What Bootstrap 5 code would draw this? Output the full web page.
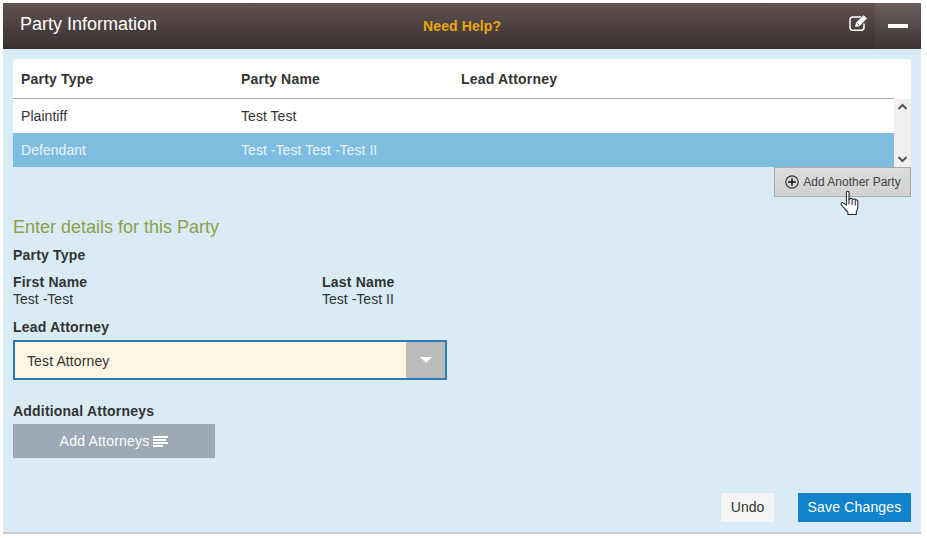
<!DOCTYPE html>
<html lang="en">
<head>
<meta charset="utf-8">
<title>Party Information</title>
<link href="https://cdn.jsdelivr.net/npm/bootstrap@5.3.0/dist/css/bootstrap.min.css" rel="stylesheet">
<style>
html,body{background:#fff;height:100%;overflow:hidden}
body{font-family:"Liberation Sans",Arial,sans-serif;font-size:14px;color:#333;line-height:17px;letter-spacing:.12px}
.pi-panel{margin:3px 0 0 3px;width:918px;height:531px;background:#d9ebf5;border-bottom:2px solid #ccc;display:flex;flex-direction:column}
.pi-head{height:46px;flex:none;background:linear-gradient(#5f5351,#3a3030);color:#fff;position:relative}
.pi-title{font-size:18px;line-height:22px;padding:10px 0 0 17px;width:400px;letter-spacing:0}
.pi-help{color:#e8a80c;font-weight:700;font-size:14px;position:absolute;left:420px;top:15px}
.pi-edit{position:absolute;left:846px;top:11px}
.pi-min{width:46px;height:46px;background:linear-gradient(#6b605e,#3c3332);display:flex;align-items:center;justify-content:center;margin-left:auto}
.pi-min i{display:block;width:20px;height:4px;background:#fff}
.pi-body{flex:1;padding:10px 10px 10px;display:flex;flex-direction:column;position:relative}
.pi-table{background:#fff;border-radius:3px 3px 0 0}
.pi-thead{height:40px;border-bottom:1px solid #aaa;margin-right:17px;display:flex;align-items:center;font-weight:700;padding-top:2px;letter-spacing:.2px}
.pi-scrollwrap{display:flex;height:68px;background:#fff}
.pi-rows{flex:1}
.pi-row{height:34px;display:flex;align-items:center;padding-top:1px;letter-spacing:.05px}
.pi-row.pi-sel{background:#7fbde0;color:#e8f3fa}
.pi-c1{width:228px;padding-left:8px}
.pi-c2{width:220px}
.pi-bar{width:17px;background:#f0f0f0;display:flex;flex-direction:column;justify-content:space-between;align-items:center;padding:4px 0}
.pi-add{align-self:flex-end;width:137px;height:30px;background:linear-gradient(#dcdcdc,#d2d2d2);border:1px solid #aaa;border-radius:0;font-size:12px;color:#444;padding:0 0 0 1px;display:flex;align-items:center;justify-content:center;gap:4px;letter-spacing:0}
.pi-hand{position:absolute;left:837px;top:141px}
.pi-sub{color:#8f9f4a;font-size:18px;line-height:22px;margin:19px 0 0;letter-spacing:0}
.pi-lbl{font-weight:700;margin:0;letter-spacing:.2px}
.pi-first{margin-top:9px}
.pi-two{display:flex;margin-top:10px}
.pi-two>div{width:309px}
.pi-val{letter-spacing:.02px}
.pi-lead{margin-top:11px}
.pi-sel-box{width:434px;height:40px;margin-top:4px;border:2px solid #2a7ab5;background:#fef6e2;display:flex;align-items:stretch}
.pi-sel-box span{flex:1;padding:2px 0 0 12px;display:flex;align-items:center}
.pi-sel-box b{width:39px;background:#bbb;display:flex;align-items:center;justify-content:center}
.pi-sel-box b i{display:block;border-left:6px solid transparent;border-right:6px solid transparent;border-top:6px solid #fff}
.pi-more{margin-top:23px}
.pi-attbtn{width:202px;height:34px;margin-top:4px;background:#9ea9b6;color:#fff;border:0;border-radius:0;font-size:14px;padding:0;display:flex;align-items:center;justify-content:center;gap:4px;letter-spacing:.2px}
.pi-foot{margin-top:auto;display:flex;justify-content:flex-end}
.pi-undo{width:53px;height:29px;background:#f5f5f5;color:#333;border:0;border-radius:0;font-size:14px;padding:0;margin-right:24px}
.pi-save{width:113px;height:29px;background:#1282cc;color:#fff;border:0;border-radius:0;font-size:14px;padding:0;letter-spacing:.18px}
</style>
</head>
<body>
<div class="pi-panel">
  <div class="pi-head d-flex">
    <div class="pi-title">Party Information</div>
    <div class="pi-help">Need Help?</div>
    <svg class="pi-edit" width="20" height="18" viewBox="0 0 20 18" fill="none"><path d="M15 9.500V13.500a2.700 2.700 0 0 1-2.700 2.700H3.700A2.700 2.700 0 0 1 1 13.500V5.700A2.700 2.700 0 0 1 3.700 3H12" stroke="#fff" stroke-width="1.500"/><path d="M6 13l1-4.200 7.600-7.600 3.400 3.400-7.600 7.600z" fill="#fff"/><path d="M8.200 9.200l2.200 2.200" stroke="#4a3f3e" stroke-width=".8"/></svg>
    <div class="pi-min"><i></i></div>
  </div>
  <div class="pi-body">
    <div class="pi-table">
      <div class="pi-thead"><div class="pi-c1">Party Type</div><div class="pi-c2">Party Name</div><div>Lead Attorney</div></div>
      <div class="pi-scrollwrap">
        <div class="pi-rows">
          <div class="pi-row"><div class="pi-c1">Plaintiff</div><div class="pi-c2">Test Test</div></div>
          <div class="pi-row pi-sel"><div class="pi-c1">Defendant</div><div class="pi-c2">Test -Test Test -Test II</div></div>
        </div>
        <div class="pi-bar">
          <svg width="11" height="8" viewBox="0 0 11 8" fill="none"><path d="M1.500 6L5.500 2l4 4" stroke="#555" stroke-width="2"/></svg>
          <svg width="11" height="8" viewBox="0 0 11 8" fill="none"><path d="M1.500 2l4 4 4-4" stroke="#555" stroke-width="2"/></svg>
        </div>
      </div>
    </div>
    <button type="button" class="btn pi-add"><svg width="14" height="14" viewBox="0 0 14 14" fill="none"><circle cx="7" cy="7" r="6.200" stroke="#333" stroke-width="1.200"/><path d="M7 3.200v7.600M3.200 7h7.600" stroke="#333" stroke-width="1.800"/></svg>Add Another Party</button>
    <svg class="pi-hand" width="19" height="26" viewBox="0 0 18 25"><path d="M6 2.500C6 .8 8.500.8 8.500 2.500V9l1-.2c.3-1 2.100-1 2.400.2l.8.100c.5-.8 2.100-.6 2.300.6.6-.4 2-.1 2 1.100v5.200c0 2.400-.8 3.500-1.500 4.800V23.500H7.500v-2C5.500 19.500 3 16 1.200 14.200c-1-1.200.3-2.700 1.800-1.800L6 14.500z" fill="#fff" stroke="#223" stroke-width="1"/><path d="M8.500 9v5M11.500 9.500v5M14.500 10v5" stroke="#223" stroke-width="1" fill="none"/></svg>
    <h2 class="pi-sub fw-normal">Enter details for this Party</h2>
    <p class="pi-lbl pi-first">Party Type</p>
    <div class="pi-two">
      <div><p class="pi-lbl">First Name</p><div class="pi-val">Test -Test</div></div>
      <div><p class="pi-lbl">Last Name</p><div class="pi-val">Test -Test II</div></div>
    </div>
    <p class="pi-lbl pi-lead">Lead Attorney</p>
    <div class="pi-sel-box"><span>Test Attorney</span><b><i></i></b></div>
    <p class="pi-lbl pi-more">Additional Attorneys</p>
    <button type="button" class="btn pi-attbtn">Add Attorneys <svg width="15" height="12" viewBox="0 0 15 12"><path d="M0 1h15v2H0zM0 4h13v2H0zM0 7h15v2H0zM0 10h10v2H0z" fill="#fff"/></svg></button>
    <div class="pi-foot">
      <button type="button" class="btn pi-undo">Undo</button>
      <button type="button" class="btn pi-save">Save Changes</button>
    </div>
  </div>
</div>
<script src="https://cdn.jsdelivr.net/npm/bootstrap@5.3.0/dist/js/bootstrap.bundle.min.js"></script>
</body>
</html>
